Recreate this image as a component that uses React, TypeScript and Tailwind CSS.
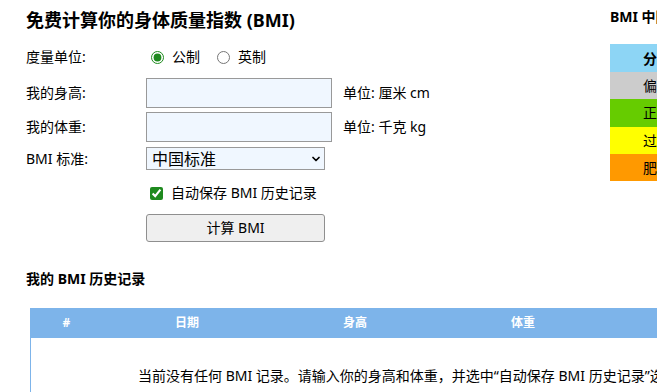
import { ChevronDown } from "lucide-react";

const levels = [
  { label: "偏瘦", color: "bg-[#cccccc]" },
  { label: "正常", color: "bg-[#66cc00]" },
  { label: "过重", color: "bg-[#ffff00]" },
  { label: "肥胖", color: "bg-[#ff9900]" },
];

const columns = [
  { label: "#", width: "w-[73px]" },
  { label: "日期", width: "w-[168px]" },
  { label: "身高", width: "w-[168px]" },
  { label: "体重", width: "w-[168px]" },
  { label: "BMI", width: "w-[168px]" },
];

export default function App() {
  return (
    <div className="relative h-[392px] w-[657px] overflow-hidden bg-white font-['Noto_Sans','Noto_Sans_CJK_SC',sans-serif] text-[14px] text-black">
      <div className="flex">
        {/* form */}
        <div className="w-[610px] shrink-0 pl-[26px] pt-[6px]">
          <h1 className="h-7 text-[18px] font-bold leading-7">免费计算你的身体质量指数 (BMI)</h1>

          <div className="mt-3 flex h-[22px] items-center">
            <span className="w-[120px] leading-5">度量单位:</span>
            <label className="ml-[5px] flex items-center gap-2">
              <input type="radio" name="unit" defaultChecked className="m-0 h-[13px] w-[13px] accent-[#1e8a1e]" />
              <span className="leading-5">公制</span>
            </label>
            <label className="ml-[17px] flex items-center gap-2">
              <input type="radio" name="unit" className="m-0 h-[13px] w-[13px] accent-[#1e8a1e]" />
              <span className="leading-5">英制</span>
            </label>
          </div>

          <div className="mt-[10px] flex items-center">
            <span className="w-[120px] leading-5">我的身高:</span>
            <input className="h-[30px] w-[186px] border border-[#999999] bg-[#f0f7ff] px-1 outline-none" />
            <span className="ml-[11px] leading-5">单位: 厘米 cm</span>
          </div>

          <div className="mt-1 flex items-center">
            <span className="w-[120px] leading-5">我的体重:</span>
            <input className="h-[30px] w-[186px] border border-[#999999] bg-[#f0f7ff] px-1 outline-none" />
            <span className="ml-[11px] leading-5">单位: 千克 kg</span>
          </div>

          <div className="mt-[5px] flex items-center">
            <span className="w-[120px] leading-5">BMI 标准:</span>
            <div className="relative">
              <select className="h-[23px] w-[179px] appearance-none border border-[#999999] bg-[#f0f7ff] pl-[5px] text-[16px] leading-5 outline-none">
                <option>中国标准</option>
                <option>WHO 标准</option>
              </select>
              <ChevronDown className="pointer-events-none absolute right-[3px] top-[6px] h-[12px] w-[12px]" strokeWidth={3.5} />
            </div>
          </div>

          <label className="mt-3 flex h-[22px] items-center gap-2 pl-[124px]">
            <input type="checkbox" defaultChecked className="m-0 h-[13px] w-[13px] accent-[#1e8a1e]" />
            <span className="leading-5">自动保存 BMI 历史记录</span>
          </label>

          <div className="mt-[10px] pl-[120px]">
            <button className="h-[28px] w-[179px] rounded-[3px] border border-[#8f8f8f] bg-[#efefef] text-[14px] leading-5">
              计算 BMI
            </button>
          </div>
        </div>

        {/* sidebar */}
        <div className="w-[250px] shrink-0 pt-[7px]">
          <h2 className="h-[20px] text-[14px] font-bold leading-5">BMI 中国标准</h2>
          <div className="mt-[17px] text-[14px]">
            <div className="flex h-[28px] items-center bg-[#8dd5f5] pl-[33px] font-bold">
              <span className="w-[90px]">分类</span>
              <span>BMI 范围</span>
            </div>
            {levels.map((l) => (
              <div key={l.label} className={`flex h-[27.25px] items-center pl-[33px] ${l.color}`}>
                <span className="w-[90px]">{l.label}</span>
              </div>
            ))}
          </div>
        </div>
      </div>

      {/* history */}
      <div className="pl-[26px] pt-[27px]">
        <h2 className="h-5 text-[14px] font-bold leading-5">我的 BMI 历史记录</h2>
        <div className="ml-1 mt-[19px] w-[900px]">
          <div className="flex h-[30px] items-center bg-[#7db4ea] text-[12px] font-bold text-white">
            {columns.map((c) => (
              <span key={c.label} className={`text-center ${c.width}`}>
                {c.label}
              </span>
            ))}
          </div>
          <div className="h-[80px] border-x border-[#7db4ea] pl-[107px] pt-[28px]">
            <p className="whitespace-nowrap leading-5">
              当前没有任何 BMI 记录。请输入你的身高和体重，并选中“自动保存 BMI 历史记录”选项。
            </p>
          </div>
        </div>
      </div>
    </div>
  );
}
